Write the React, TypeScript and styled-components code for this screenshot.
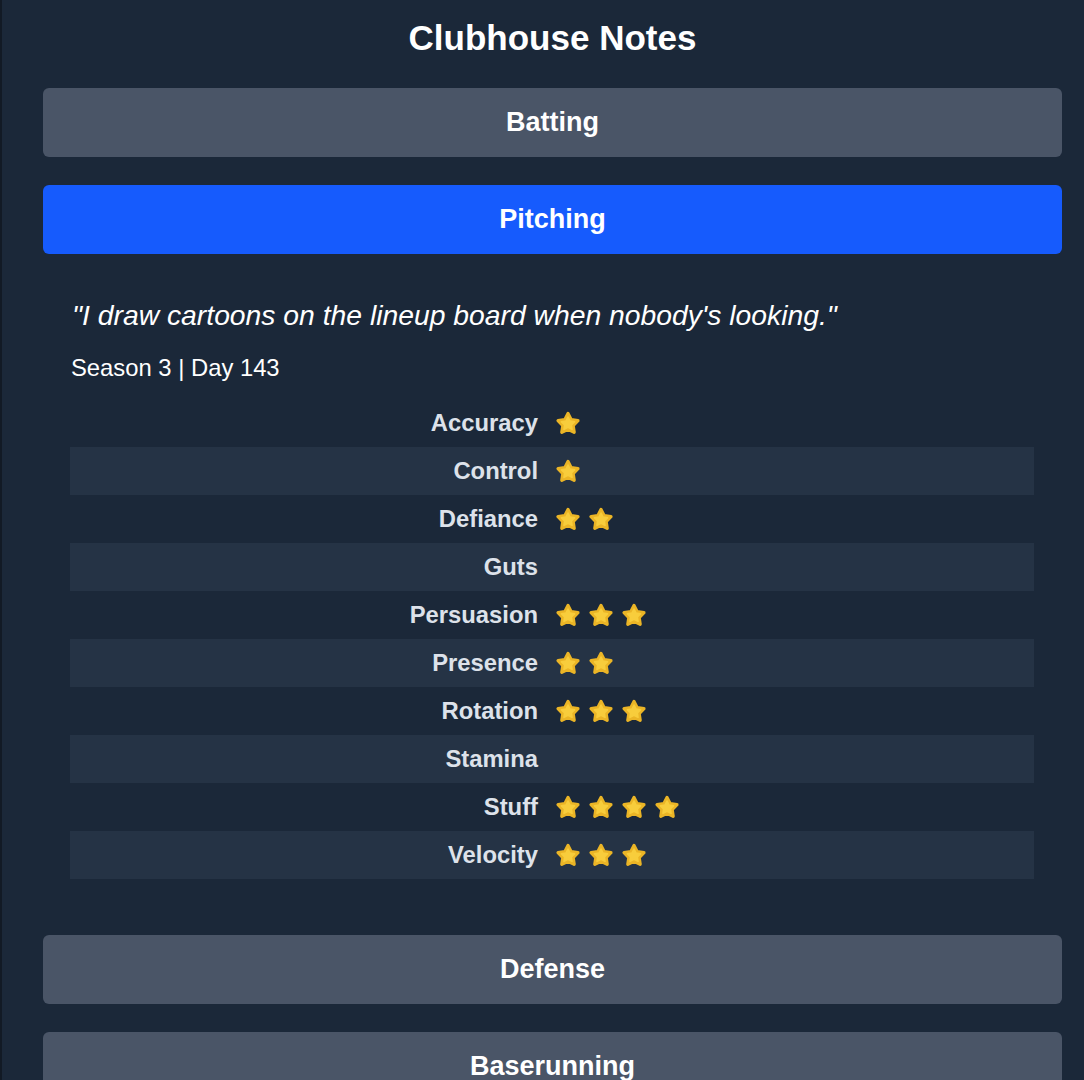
import React from "react";
import styled, { createGlobalStyle } from "styled-components";

const Global = createGlobalStyle`
  html, body { margin: 0; padding: 0; background: #1b2839; }
  body { font-family: "Liberation Sans", Arial, sans-serif; color: #ffffff; }
`;

const Page = styled.div`
  min-height: 1080px;
  border-left: 2px solid #121a25;
  background: #1b2839;
  padding: 0 22px 0 41px;
  box-sizing: border-box;
`;

const Title = styled.h1`
  margin: 0;
  padding: 18px 0 0;
  height: 88px;
  box-sizing: border-box;
  text-align: center;
  font-size: 35px;
  line-height: 40px;
  font-weight: 700;
  color: #ffffff;
`;

const Sections = styled.div`
  display: flex;
  flex-direction: column;
`;

const SectionButton = styled.button<{ $active?: boolean }>`
  display: block;
  width: 100%;
  height: 69px;
  border: none;
  border-radius: 6px;
  background: ${(p) => (p.$active ? "#165bfd" : "#4a5567")};
  color: #ffffff;
  font-family: "Liberation Sans", Arial, sans-serif;
  font-size: 27px;
  font-weight: 700;
  cursor: pointer;
  margin-bottom: 28px;
`;

const Panel = styled.div`
  padding: 18px 28px 56px 27px;
  margin-top: -28px;
`;

const Quote = styled.p`
  margin: 26px 0 0 2px;
  font-family: "Liberation Sans", Arial, sans-serif;
  font-style: italic;
  font-size: 28.3px;
  line-height: 34px;
  color: #ffffff;
`;

const Meta = styled.p`
  margin: 21px 0 0 1px;
  font-family: "Liberation Sans", Arial, sans-serif;
  font-size: 23.8px;
  line-height: 30px;
  color: #ffffff;
`;

const Table = styled.div`
  margin-top: 16px;
  display: flex;
  flex-direction: column;
`;

const Row = styled.div<{ $striped: boolean }>`
  display: grid;
  grid-template-columns: 1fr 1fr;
  height: 48px;
  align-items: center;
  background: ${(p) => (p.$striped ? "#253345" : "transparent")};
`;

const Label = styled.span`
  text-align: right;
  padding-right: 14px;
  font-size: 23.8px;
  font-weight: 700;
  color: #dde2ea;
`;

const Stars = styled.span`
  display: flex;
  gap: 7px;
  padding-left: 3px;
  align-items: center;
`;

const StarIcon = () => (
  <svg width="26" height="26" viewBox="0 0 24 24">
    <path
      d="M12 3.2L14.94 8.95L21.2 9.9L16.76 14.35L17.7 20.6L12 17.8L6.3 20.6L7.24 14.35L2.8 9.9L9.06 8.95Z"
      fill="#f5c534"
      stroke="#ebb526"
      strokeWidth="3"
      strokeLinejoin="round"
    />
    <path
      d="M12 6.5L13.9 10.3L18 10.9L15.1 13.8L15.7 17.8L12 15.9L8.3 17.8L8.9 13.8L6 10.9L10.1 10.3Z"
      fill="#f8cd3c"
      stroke="#f8cd3c"
      strokeWidth="1.5"
      strokeLinejoin="round"
    />
  </svg>
);

const ratings: [string, number][] = [
  ["Accuracy", 1],
  ["Control", 1],
  ["Defiance", 2],
  ["Guts", 0],
  ["Persuasion", 3],
  ["Presence", 2],
  ["Rotation", 3],
  ["Stamina", 0],
  ["Stuff", 4],
  ["Velocity", 3],
];

export default function App() {
  return (
    <>
      <Global />
      <Page>
        <Title>Clubhouse Notes</Title>
        <Sections>
          <SectionButton>Batting</SectionButton>
          <SectionButton $active>Pitching</SectionButton>
          <Panel>
            <Quote>"I draw cartoons on the lineup board when nobody's looking."</Quote>
            <Meta>Season 3 | Day 143</Meta>
            <Table>
              {ratings.map(([name, n], i) => (
                <Row key={name} $striped={i % 2 === 1}>
                  <Label>{name}</Label>
                  <Stars>
                    {Array.from({ length: n }).map((_, j) => (
                      <StarIcon key={j} />
                    ))}
                  </Stars>
                </Row>
              ))}
            </Table>
          </Panel>
          <SectionButton>Defense</SectionButton>
          <SectionButton>Baserunning</SectionButton>
        </Sections>
      </Page>
    </>
  );
}
